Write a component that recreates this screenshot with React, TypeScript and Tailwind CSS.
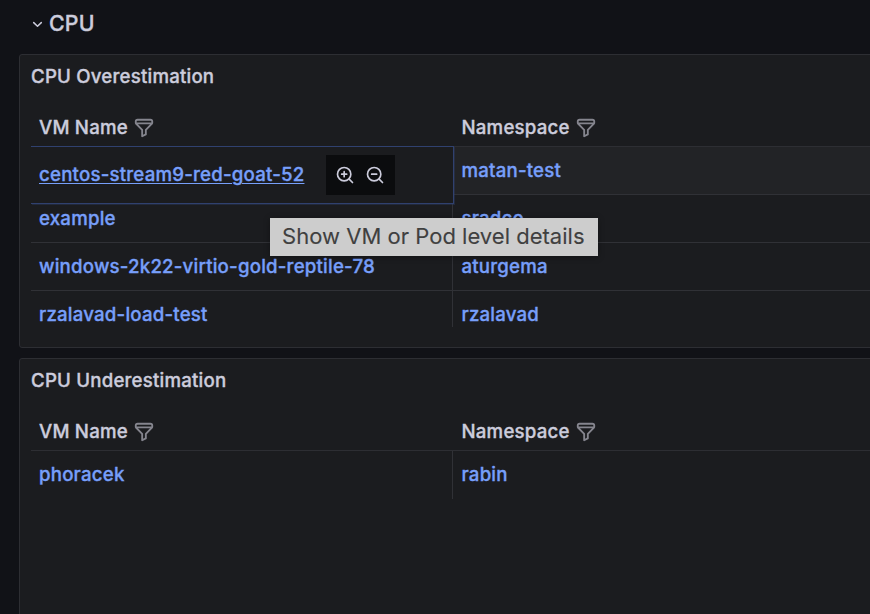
import type { ReactNode } from "react";

function FilterIcon() {
  return (
    <svg className="ml-[5px] size-[22px] shrink-0 fill-[#85858e]" viewBox="0 0 24 24">
      <path d="M19,2H5A3,3,0,0,0,2,5V6.17a3,3,0,0,0,.25,1.2l0,.06a2.81,2.81,0,0,0,.59.86L9,14.41V21a1,1,0,0,0,.47.85A1,1,0,0,0,10,22a1,1,0,0,0,.45-.11l4-2A1,1,0,0,0,15,19V14.41l6.12-6.12a2.81,2.81,0,0,0,.59-.86l0-.06A3,3,0,0,0,22,6.17V5A3,3,0,0,0,19,2ZM13.29,13.29A1,1,0,0,0,13,14v4.38l-2,1V14a1,1,0,0,0-.29-.71L5.41,8H18.59ZM20,6H4V5A1,1,0,0,1,5,4H19a1,1,0,0,1,1,1Z" />
    </svg>
  );
}

function ZoomIcon({ plus = false }: { plus?: boolean }) {
  return (
    <svg
      className="size-[20px] fill-none stroke-[#ccccdc] stroke-2"
      viewBox="0 0 24 24"
      strokeLinecap="round"
    >
      <circle cx="11" cy="11" r="8" />
      <path d="M17 17l4 4M8 11h6" />
      {plus && <path d="M11 8v6" />}
    </svg>
  );
}

function HeaderRow() {
  return (
    <div className="flex h-[38px] items-center border-b border-[#2d2e33]">
      {["VM Name", "Namespace"].map((label) => (
        <div key={label} className="flex w-[422.5px] shrink-0 items-center pl-2">
          {label}
          <FilterIcon />
        </div>
      ))}
    </div>
  );
}

type RowProps = { name: ReactNode; namespace: string; hovered?: boolean; last?: boolean; clipped?: boolean };

function Row({ name, namespace, hovered, last, clipped }: RowProps) {
  const rule = last ? "" : "border-b border-b-[#303136]";
  return (
    <div className={`flex text-[#779ffa] ${clipped ? "h-9" : "h-12"} ${hovered ? "bg-[#222326]" : ""}`}>
      <div className={`w-[422px] shrink-0 border-r border-r-[#303136] pt-[10px] pl-2 ${rule}`}>{name}</div>
      <div className={`grow pt-[10px] pl-[8.5px] ${rule}`}>{namespace}</div>
    </div>
  );
}

function Panel({ title, className, children }: { title: string; className: string; children: ReactNode }) {
  return (
    <section className={`w-[900px] shrink-0 rounded-[3px] border border-[#2d2e33] bg-[#1b1c1f] pl-[11px] ${className}`}>
      <h2 className="flex h-[54px] items-start pt-[8px]">{title}</h2>
      {children}
    </section>
  );
}

export default function App() {
  return (
    <main className="relative flex h-[614px] w-[870px] flex-col overflow-hidden bg-[#111217] pl-[19px] font-['Inter',sans-serif] text-[18.67px] leading-7 font-medium tracking-[0.2px] text-[#ccccdc] [-webkit-text-stroke:0.35px_currentColor]">
      <h1 className="flex h-[54px] shrink-0 items-start pt-[9px] pl-[13px] text-[21.33px]">
        <svg className="mt-[10px] mr-[6px] h-[10px] w-[11px] fill-none stroke-[#ccccdc]" viewBox="0 0 11 10" strokeWidth="1.5" strokeLinecap="round" strokeLinejoin="round">
          <path d="M1.7 3.6 5.5 7.2 9.3 3.6" />
        </svg>
        CPU
      </h1>
      <Panel title="CPU Overestimation" className="h-[294px]">
        <HeaderRow />
        <div className="relative">
          <Row name="" namespace="matan-test" hovered />
          <Row name="example" namespace="sradco" />
          <Row name="windows-2k22-virtio-gold-reptile-78" namespace="aturgema" />
          <Row name="rzalavad-load-test" namespace="rzalavad" last clipped />
          <div className="absolute -top-px left-0 flex h-[58px] w-[423px] items-center border border-l-0 border-[#30416f] bg-[#1b1c1f] pl-2 shadow-[1px_1px_0_rgba(48,65,111,0.35)]">
            <a className="text-[#779ffa] underline decoration-[1.4px] underline-offset-[2px]">centos-stream9-red-goat-52</a>
            <div className="ml-[22px] flex h-10 w-[69px] items-center gap-[10px] bg-[#0b0c0e] pl-[9px]">
              <ZoomIcon plus />
              <ZoomIcon />
            </div>
          </div>
        </div>
      </Panel>
      <Panel title="CPU Underestimation" className="mt-[10px] h-[270px]">
        <HeaderRow />
        <Row name="phoracek" namespace="rabin" last />
      </Panel>
      <div className="absolute top-[218px] left-[270px] flex h-[38px] w-[328px] items-center bg-[#cdcdcd] pb-[2px] pl-3 text-[22px] font-normal tracking-[0.02px] whitespace-nowrap text-[#404040] shadow-[0_1px_6px_rgba(0,0,0,0.35)] [-webkit-text-stroke:0.1px_currentColor]">
        Show VM or Pod level details
      </div>
    </main>
  );
}
